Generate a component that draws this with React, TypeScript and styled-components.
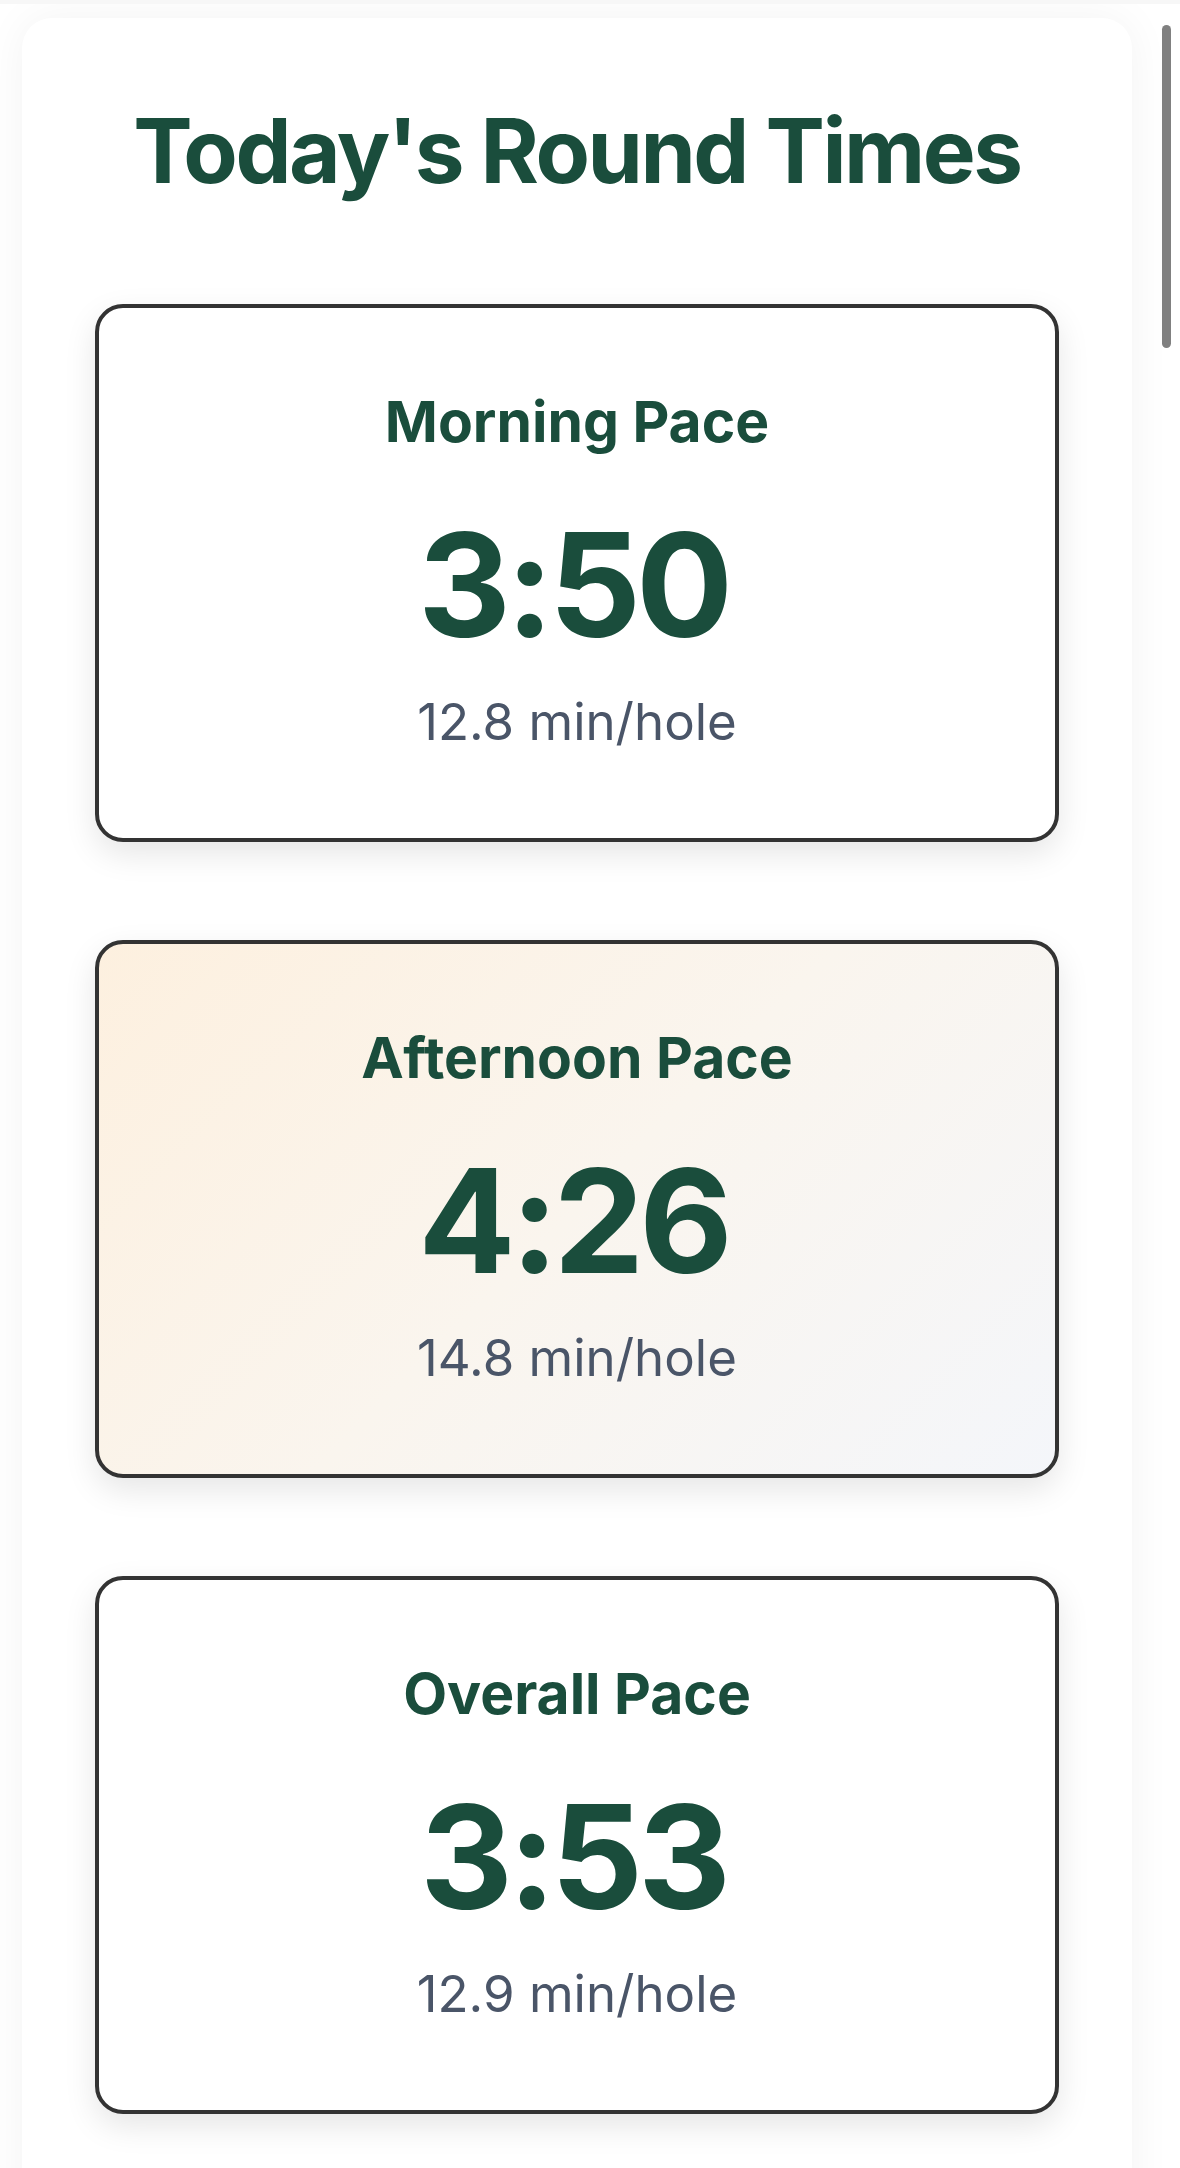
import React from "react";
import styled, { createGlobalStyle } from "styled-components";

type Pace = { label: string; time: string; perHole: string; warm?: boolean };

const paces: Pace[] = [
    { label: "Morning Pace", time: "3:50", perHole: "12.8 min/hole" },
    { label: "Afternoon Pace", time: "4:26", perHole: "14.8 min/hole", warm: true },
    { label: "Overall Pace", time: "3:53", perHole: "12.9 min/hole" },
];

const GlobalStyle = createGlobalStyle`
    html, body {
        margin: 0;
        padding: 0;
        background: #ffffff;
        overflow: hidden;
    }
    body {
        font-family: Inter, "Noto Sans", "Liberation Sans", sans-serif;
    }
`;

const PaceCard = ({ pace }: { pace: Pace }) => {
    return (
        <Card $warm={pace.warm}>
            <Label>{pace.label}</Label>
            <Time>{pace.time}</Time>
            <PerHole>{pace.perHole}</PerHole>
        </Card>
    );
};

export default function App() {
    return (
        <>
            <GlobalStyle />
            <Page>
                <Panel>
                    <Title>Today's Round Times</Title>
                    <CardList>
                        {paces.map(p => <PaceCard key={p.label} pace={p} />)}
                    </CardList>
                </Panel>
                <ScrollRail>
                    <ScrollThumb />
                </ScrollRail>
            </Page>
        </>
    );
}

const Page = styled("div")`
    display: flex;
    align-items: flex-start;
    height: 2168px;
    box-sizing: border-box;
    border-top: 4px solid #f7f7f7;
    padding: 14px 0 0 22px;
    overflow: hidden;
`;

const Panel = styled("main")`
    width: 1110px;
    flex-shrink: 0;
    min-height: 2300px;
    box-sizing: border-box;
    padding: 88px 73px 0;
    background: #ffffff;
    border-radius: 30px 30px 0 0;
    box-shadow: 0 0 44px rgba(0, 0, 0, 0.05);
`;

const Title = styled("h1")`
    margin: 0 0 109px;
    font-size: 89px;
    line-height: 89px;
    font-weight: 700;
    color: #1a4d3c;
    text-align: center;
    letter-spacing: -2.5px;
`;

const CardList = styled("div")`
    display: flex;
    flex-direction: column;
    gap: 98px;
`;

const Card = styled("section")<{ $warm?: boolean }>`
    height: 538px;
    box-sizing: border-box;
    display: flex;
    flex-direction: column;
    align-items: center;
    padding-top: 86px;
    border: 4px solid #333333;
    border-radius: 28px;
    background: ${p => p.$warm
        ? "linear-gradient(135deg, #fdf0df 0%, #faf5ee 50%, #f4f6fa 100%)"
        : "#ffffff"};
    box-shadow: 0 12px 32px rgba(0, 0, 0, 0.1);
`;

const Label = styled("h2")`
    margin: 0;
    font-size: 57px;
    line-height: 56px;
    font-weight: 700;
    color: #1a4d3c;
`;

const Time = styled("div")`
    margin: 63px 8px 0 0;
    font-size: 144px;
    line-height: 144px;
    font-weight: 700;
    color: #1a4d3c;
    letter-spacing: -5px;
`;

const PerHole = styled("div")`
    margin-top: 39px;
    font-size: 51px;
    line-height: 51px;
    font-weight: 400;
    color: #4a5568;
`;

const ScrollRail = styled("div")`
    margin-left: 30px;
    width: 9px;
    padding-top: 7px;
`;

const ScrollThumb = styled("div")`
    height: 323px;
    border-radius: 5px;
    background: #808080;
`;
